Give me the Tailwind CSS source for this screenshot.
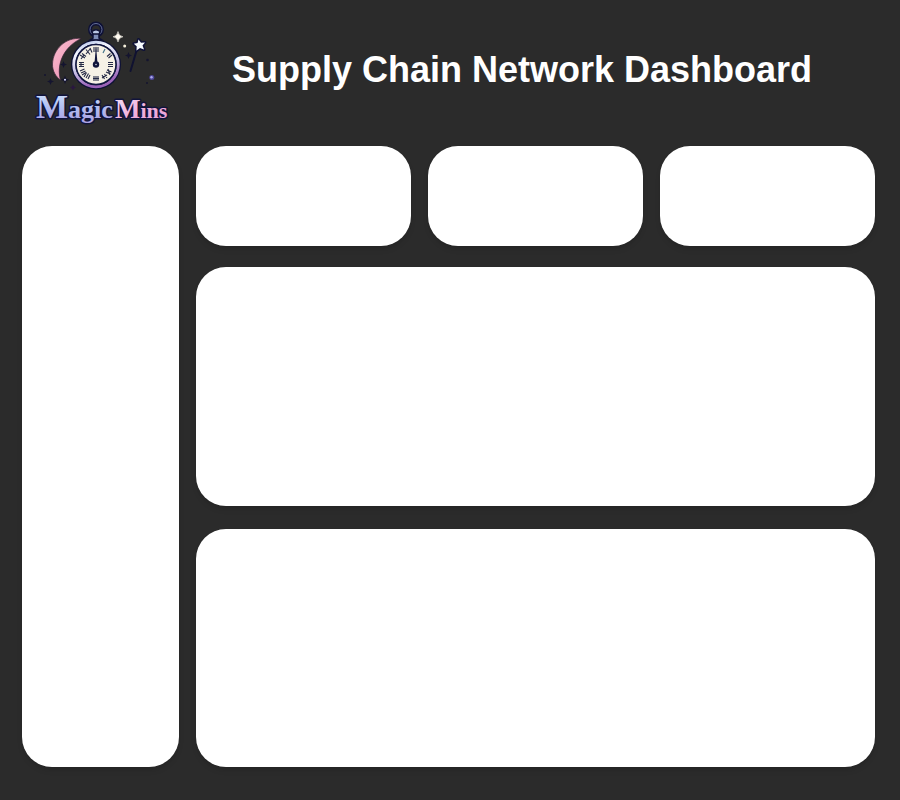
<!DOCTYPE html>
<html lang="en">
<head>
<meta charset="utf-8">
<meta name="viewport" content="width=device-width, initial-scale=1">
<title>Supply Chain Network Dashboard</title>
<script src="https://cdn.jsdelivr.net/npm/@tailwindcss/browser@4"></script>
</head>
<body class="flex min-h-screen flex-col bg-[#2b2b2b] pt-4 pr-[25px] pb-[33px] pl-[22px] font-['Liberation_Sans',Arial,sans-serif]">
  <header class="mb-[10px] flex items-center">
    <svg class="h-[120px] w-[147px] shrink-0 overflow-visible" viewBox="22 16 147 120" role="img" aria-label="Magic Mins">
      <defs>
        <linearGradient id="magic" x1="0" y1="0" x2="0" y2="1"><stop offset="0" stop-color="#d5e9ff"/><stop offset=".5" stop-color="#b4c0f2"/><stop offset="1" stop-color="#a99be0"/></linearGradient>
        <linearGradient id="mins" x1="0" y1="0" x2="1" y2="1"><stop offset="0" stop-color="#efe6fb"/><stop offset=".5" stop-color="#f3b1da"/><stop offset="1" stop-color="#e7a0d8"/></linearGradient>
        <linearGradient id="ring" x1="0" y1="0" x2=".3" y2="1"><stop offset="0" stop-color="#a9bbe6"/><stop offset=".25" stop-color="#f4f6ff"/><stop offset=".6" stop-color="#c9c5e8"/><stop offset="1" stop-color="#9b62b8"/></linearGradient>
        <linearGradient id="moon" x1="0" y1="0" x2="1" y2="1"><stop offset="0" stop-color="#fbc1cf"/><stop offset="1" stop-color="#ea85b0"/></linearGradient>
      </defs>
      <path d="M81 38.500C66 37 53 49 52.500 64C52.300 71 56 77 60.500 80C56.500 66 62 48 81 38.500Z" fill="url(#moon)" stroke="#3a2638" stroke-width=".7"/>
      <circle cx="96" cy="29.500" r="6" fill="none" stroke="#0e1136" stroke-width="4"/>
      <circle cx="96" cy="29.500" r="6" fill="none" stroke="#667099" stroke-width="1"/>
      <path d="M92 31.500Q96 28 100 31.500L99 35H93Z" fill="#bac7e6" stroke="#0e1136" stroke-width="1.500"/>
      <path d="M93 34H99V38L102 40H90L93 38Z" fill="#7e8db8" stroke="#0e1136" stroke-width="1.500"/>
      <circle cx="96" cy="64.500" r="25" fill="#0e1136"/>
      <circle cx="96" cy="64.500" r="22.200" fill="none" stroke="url(#ring)" stroke-width="3"/>
      <circle cx="96" cy="64.500" r="20" fill="#f6f1e6" stroke="#111640" stroke-width="1.500"/>
      <g stroke="#252a46" stroke-width="1.100">
        <path d="M94 47v5M96 47v5M98 47v5"/>
        <path d="M105 49l-2 4" stroke="#3f7188"/>
        <path d="M110.500 53.500l-3.500 3M112 55l-3.500 3"/>
        <path d="M108 62.500h5M108 64.500h5M108 66.500h5"/>
        <path d="M107 70l4.500 2M106 72l4.500 2M108 69l2 6"/>
        <path d="M102 75l2.500 4M104.500 74l2.500 4M102 78l5-3"/>
        <path d="M94 76v5M96 76v5M98 76v5M93 78.500h6"/>
        <path d="M84 77l2.500-4.500M86 78l2.500-4.500M88 79l2-4"/>
        <path d="M80 71l4.500-2M81 73l4.500-2M82 75l4-2.500"/>
        <path d="M79 62.500h5M79 64.500h5M79 66.500h5M81 62v5"/>
        <path d="M80 55l5 3M81 59l3-4M82 53.500l4 3"/>
        <path d="M86 49.500l4 5M86 54l4-5M90 48l2 4.500"/>
      </g>
      <path d="M96 46L97.400 62H94.600Z" fill="#10143b"/>
      <circle cx="96" cy="64.500" r="3.200" fill="#10143b"/>
      <circle cx="96" cy="64.500" r=".8" fill="#cfd2df"/>
      <path d="M118 31.500Q118.500 36 123 36.800Q118.500 37.500 118 42Q117.500 37.500 113 36.800Q117.500 36 118 31.500Z" fill="#fffaf0" stroke="#fffaf0" stroke-width=".5"/>
      <circle cx="124.700" cy="46" r="1.500" fill="#f5f0dc"/>
      <path d="M137 49L130.500 71" stroke="#101231" stroke-width="2" stroke-linecap="round"/>
      <path d="M138.500 39.500L141 42.700L145 42.500L142.500 45.500L144 49.500L140 48L136.500 50.500L136.700 46.300L133.800 43.700L137.600 42.900Z" fill="#f7fbff" stroke="#0f1237" stroke-width="3" stroke-linejoin="round" paint-order="stroke"/>
      <g fill="#14142f">
        <path d="M128.500 52l1 2.500 2.500 1-2.500 1-1 2.500-1-2.500-2.500-1 2.500-1Z"/>
        <path d="M63.500 61l1 2.500 2.500 1-2.500 1-1 2.500-1-2.500-2.500-1 2.500-1Z"/>
        <path d="M50.500 78l1 2.500 2.500 1-2.500 1-1 2.500-1-2.500-2.500-1 2.500-1Z"/>
        <path d="M65 75.500l1.200 3 3 1.200-3 1.200-1.200 3-1.200-3-3-1.200 3-1.200Z"/>
        <path d="M73 84.500l1 2 2 1-2 1-1 2-1-2-2-1 2-1Z" fill="#2a1740"/>
        <circle cx="45" cy="75" r="1"/><circle cx="147.500" cy="60" r="1.300"/><circle cx="147" cy="83" r="1"/>
      </g>
      <circle cx="65" cy="79.700" r="1" fill="#dfe3ff"/>
      <circle cx="151.800" cy="77.500" r="2.500" fill="#4e4797"/>
      <circle cx="151.500" cy="77.200" r="1.200" fill="#aaa9ee"/>
      <g font-family="'Liberation Serif', 'Times New Roman', serif" font-weight="bold" stroke="#11143b" stroke-width="3" stroke-linejoin="round" paint-order="stroke">
        <text x="36" y="118" font-size="26" fill="url(#magic)"><tspan font-size="34">M</tspan>agic</text>
        <text x="115" y="118" font-size="22" fill="url(#mins)"><tspan font-size="27">M</tspan>ins</text>
      </g>
    </svg>
    <h1 class="mb-3 flex-1 text-center text-4xl font-bold text-white">Supply Chain Network Dashboard</h1>
  </header>
  <div class="flex flex-1 gap-[17px]">
    <aside class="w-[157px] shrink-0 rounded-[30px] bg-white shadow-md" aria-label="Sidebar"></aside>
    <main class="flex flex-1 flex-col">
      <div class="mb-[21px] grid grid-cols-3 gap-[17px]">
        <section class="h-[100px] rounded-[30px] bg-white shadow-md"></section>
        <section class="h-[100px] rounded-[30px] bg-white shadow-md"></section>
        <section class="h-[100px] rounded-[30px] bg-white shadow-md"></section>
      </div>
      <div class="grid flex-1 grid-rows-2 gap-[23px]">
        <section class="rounded-[30px] bg-white shadow-md"></section>
        <section class="rounded-[30px] bg-white shadow-md"></section>
      </div>
    </main>
  </div>
</body>
</html>
